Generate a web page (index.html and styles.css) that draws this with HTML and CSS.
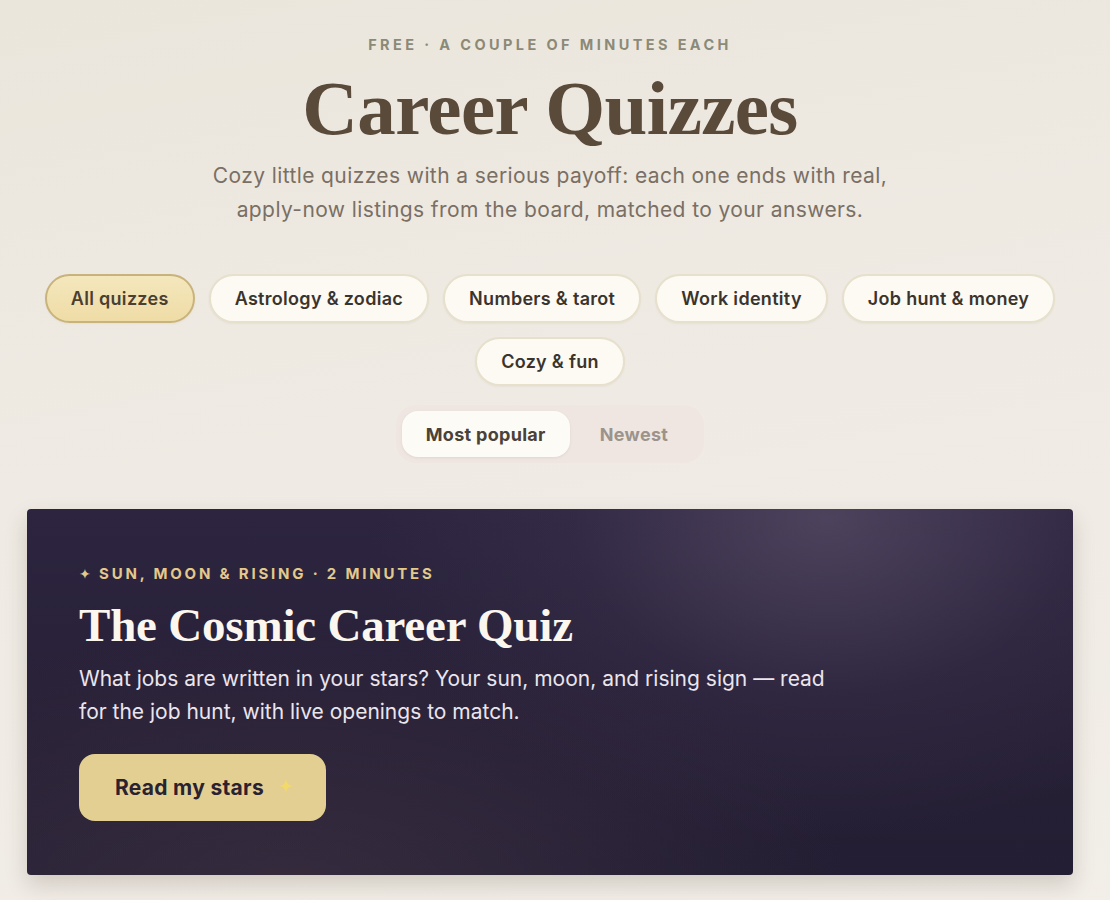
FILE: index.html
```html
<!DOCTYPE html>
<html lang="en">
<head>
<meta charset="utf-8">
<title>Career Quizzes</title>
<link rel="stylesheet" href="styles.css">
</head>
<body>
<main class="page">
  <header class="hero">
    <p class="eyebrow">FREE · A COUPLE OF MINUTES EACH</p>
    <h1 class="title">Career Quizzes</h1>
    <p class="lede">Cozy little quizzes with a serious payoff: each one ends with real,<br>apply-now listings from the board, matched to your answers.</p>
  </header>

  <nav class="chips">
    <button class="chip chip-active">All quizzes</button>
    <button class="chip">Astrology &amp; zodiac</button>
    <button class="chip">Numbers &amp; tarot</button>
    <button class="chip">Work identity</button>
    <button class="chip">Job hunt &amp; money</button>
    <button class="chip">Cozy &amp; fun</button>
  </nav>

  <div class="sort-wrap">
    <div class="sort">
      <button class="sort-btn sort-active">Most popular</button>
      <button class="sort-btn">Newest</button>
    </div>
  </div>

  <section class="feature">
    <p class="feature-eyebrow"><span class="spark">✦</span> SUN, MOON &amp; RISING · 2 MINUTES</p>
    <h2 class="feature-title">The Cosmic Career Quiz</h2>
    <p class="feature-text">What jobs are written in your stars? Your sun, moon, and rising sign — read<br>for the job hunt, with live openings to match.</p>
    <button class="cta">Read my stars
      <svg class="cta-icon" viewBox="0 0 20 20" width="16" height="16" aria-hidden="true">
        <path d="M10 1 C10.8 7 13 9.2 19 10 C13 10.8 10.8 13 10 19 C9.2 13 7 10.8 1 10 C7 9.2 9.2 7 10 1 Z" fill="#f7dd5c"/>
      </svg>
    </button>
  </section>
</main>
</body>
</html>
```
FILE: styles.css
```css
* { box-sizing: border-box; }

html, body {
  margin: 0;
  padding: 0;
}

body {
  min-height: 900px;
  background: linear-gradient(170deg, #ebe6dc 0%, #efeae3 45%, #f2eee8 100%);
  font-family: Inter, "DejaVu Sans", sans-serif;
  color: #3a342d;
}

.page {
  padding: 36px 37px 40px 27px;
}

.hero {
  text-align: center;
}

.eyebrow {
  margin: 0;
  font-size: 14.5px;
  font-weight: 700;
  letter-spacing: 3.4px;
  color: #8b8a78;
  line-height: 18px;
}

.title {
  margin: 14px 0 0;
  font-family: "Liberation Serif", "Times New Roman", serif;
  font-weight: 700;
  font-size: 77px;
  letter-spacing: -0.6px;
  line-height: 80px;
  color: #5a4a3a;
}

.lede {
  margin: 11px 0 0;
  font-size: 21px;
  line-height: 34px;
  color: #7a6f64;
  letter-spacing: 0.4px;
}

.chips {
  margin-top: 47px;
  display: flex;
  flex-wrap: wrap;
  justify-content: center;
  gap: 14px 14px;
  padding: 0 15px;
}

.chip {
  height: 49px;
  padding: 0 24px;
  border-radius: 25px;
  border: 2px solid #e6e0cc;
  background: #fcfaf3;
  font-family: Inter, "DejaVu Sans", sans-serif;
  font-size: 18px;
  font-weight: 600;
  letter-spacing: 0.3px;
  color: #3a342d;
  box-shadow: 0 1px 2px rgba(120, 100, 60, 0.06);
}

.chip-active {
  background: linear-gradient(180deg, #f4e7bd 0%, #efdca6 100%);
  border-color: #c9b37c;
  color: #4a3f30;
}

.sort-wrap {
  margin-top: 19px;
  display: flex;
  justify-content: center;
}

.sort {
  display: flex;
  gap: 0;
  padding: 6px;
  border-radius: 20px;
  background: #efe6e2;
}

.sort-btn {
  height: 46px;
  padding: 0 24px;
  border: none;
  border-radius: 16px;
  background: transparent;
  font-family: Inter, "DejaVu Sans", sans-serif;
  font-size: 18px;
  font-weight: 700;
  letter-spacing: 0.3px;
  color: #9c938a;
}

.sort-btn + .sort-btn {
  padding: 0 30px;
}

.sort-active {
  background: #fdfbf6;
  color: #4a4138;
  box-shadow: 0 1px 3px rgba(120, 100, 80, 0.12);
}

.feature {
  margin-top: 46px;
  height: 366px;
  padding: 55px 52px 0;
  border-radius: 4px;
  background:
    radial-gradient(ellipse 460px 320px at 800px 10px, rgba(98, 86, 112, 0.6) 0%, rgba(70, 58, 88, 0.25) 55%, rgba(40, 32, 56, 0) 100%),
    radial-gradient(ellipse 560px 260px at 260px 380px, rgba(72, 56, 72, 0.5) 0%, rgba(40, 32, 50, 0) 100%),
    linear-gradient(180deg, #2d2540 0%, #272036 60%, #231e33 100%);
  box-shadow: 0 10px 22px rgba(60, 45, 30, 0.18);
  color: #f6f1ea;
}

.feature-eyebrow {
  margin: 0;
  font-size: 15px;
  font-weight: 700;
  letter-spacing: 2.8px;
  color: #e3c98c;
  line-height: 20px;
}

.spark {
  font-family: "DejaVu Sans", sans-serif;
  font-size: 14px;
  letter-spacing: 0;
  margin-right: 2px;
}

.feature-title {
  margin: 15px 0 0;
  font-family: "Liberation Serif", "Times New Roman", serif;
  font-weight: 700;
  font-size: 47px;
  line-height: 52px;
  letter-spacing: -0.2px;
  color: #fbf6ee;
}

.feature-text {
  margin: 11px 0 0;
  font-size: 21px;
  line-height: 33px;
  color: #ebe5ee;
  letter-spacing: 0;
}

.cta {
  margin-top: 26px;
  height: 67px;
  width: 247px;
  display: flex;
  align-items: center;
  justify-content: center;
  gap: 14px;
  border: none;
  border-radius: 16px;
  background: #e4cf93;
  font-family: Inter, "DejaVu Sans", sans-serif;
  font-size: 21px;
  font-weight: 700;
  letter-spacing: 0.3px;
  color: #2a2230;
  padding: 0 0 0 4px;
}

.cta-icon {
  opacity: 0.75;
  margin-top: -4px;
}
```
